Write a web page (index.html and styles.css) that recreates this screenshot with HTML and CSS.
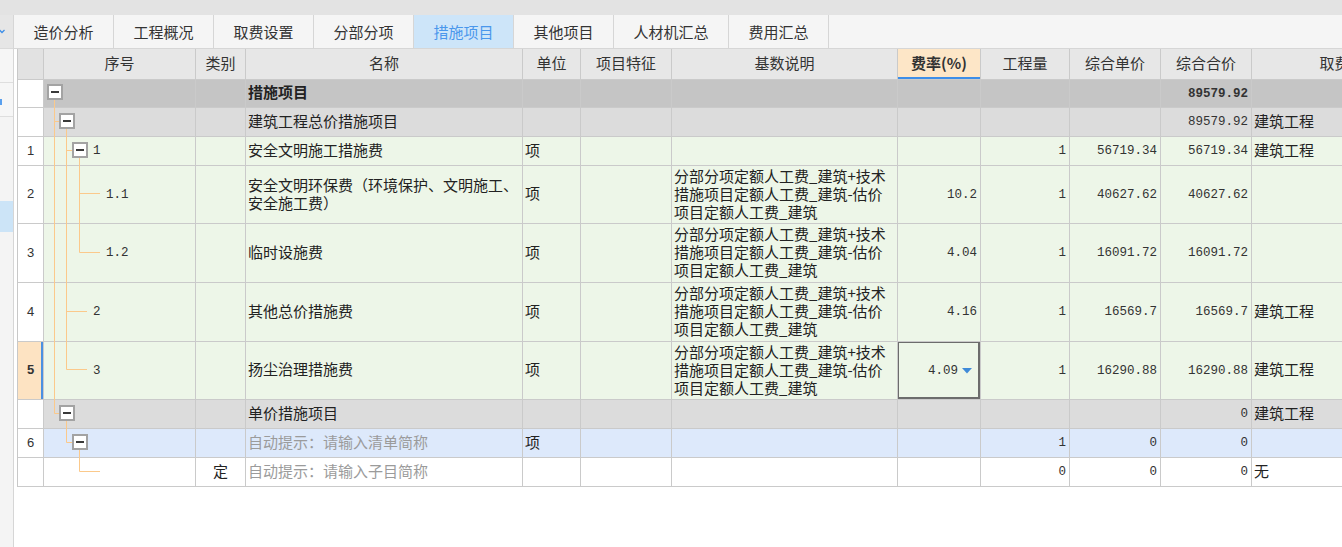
FILE: index.html
```html
<!DOCTYPE html>
<html lang="zh">
<head>
<meta charset="utf-8">
<title>措施项目</title>
<link rel="stylesheet" href="styles.css">
</head>
<body>
<div class="topbar"></div>
<div class="main">
  <aside class="side">
    <div class="side-head">
      <svg class="chev" width="6" height="5" viewBox="0 0 6 5"><polyline points="0.5,1 3,3.5 5.5,1" fill="none" stroke="#3d8ee8" stroke-width="1.3"/></svg>
    </div>
    <div class="side-item"></div>
    <div class="side-item"><span class="side-mark"></span></div>
    <div class="side-fill"></div>
    <div class="side-active"></div>
  </aside>
  <section class="content">
    <nav class="tabs">
      <div class="tab">造价分析</div>
      <div class="tab">工程概况</div>
      <div class="tab">取费设置</div>
      <div class="tab">分部分项</div>
      <div class="tab active">措施项目</div>
      <div class="tab">其他项目</div>
      <div class="tab wide">人材机汇总</div>
      <div class="tab">费用汇总</div>
    </nav>
    <div class="sheet">
      <div class="grid">
        <div class="row head">
          <div class="c"></div>
          <div class="c">序号</div>
          <div class="c">类别</div>
          <div class="c">名称</div>
          <div class="c">单位</div>
          <div class="c">项目特征</div>
          <div class="c">基数说明</div>
          <div class="c rate-head">费率(%)</div>
          <div class="c">工程量</div>
          <div class="c">综合单价</div>
          <div class="c">综合合价</div>
          <div class="c">取费专业</div>
        </div>
        <div class="body">
          <div class="row h28 bg-top">
            <div class="c num"></div>
            <div class="c"></div>
            <div class="c"></div>
            <div class="c bold">措施项目</div>
            <div class="c"></div>
            <div class="c"></div>
            <div class="c"></div>
            <div class="c"></div>
            <div class="c"></div>
            <div class="c"></div>
            <div class="c n bold">89579.92</div>
            <div class="c"></div>
          </div>
          <div class="row h29 bg-sub">
            <div class="c num"></div>
            <div class="c"></div>
            <div class="c"></div>
            <div class="c">建筑工程总价措施项目</div>
            <div class="c"></div>
            <div class="c"></div>
            <div class="c"></div>
            <div class="c"></div>
            <div class="c"></div>
            <div class="c"></div>
            <div class="c n">89579.92</div>
            <div class="c">建筑工程</div>
          </div>
          <div class="row h29 bg-green">
            <div class="c num">1</div>
            <div class="c seq l2">1</div>
            <div class="c"></div>
            <div class="c">安全文明施工措施费</div>
            <div class="c">项</div>
            <div class="c"></div>
            <div class="c"></div>
            <div class="c"></div>
            <div class="c n">1</div>
            <div class="c n">56719.34</div>
            <div class="c n">56719.34</div>
            <div class="c">建筑工程</div>
          </div>
          <div class="row h58 bg-green">
            <div class="c num">2</div>
            <div class="c seq l3">1.1</div>
            <div class="c"></div>
            <div class="c wrap">安全文明环保费（环境保护、文明施工、<br>安全施工费）</div>
            <div class="c">项</div>
            <div class="c"></div>
            <div class="c wrap">分部分项定额人工费_建筑+技术<br>措施项目定额人工费_建筑-估价<br>项目定额人工费_建筑</div>
            <div class="c n">10.2</div>
            <div class="c n">1</div>
            <div class="c n">40627.62</div>
            <div class="c n">40627.62</div>
            <div class="c"></div>
          </div>
          <div class="row h59 bg-green">
            <div class="c num">3</div>
            <div class="c seq l3">1.2</div>
            <div class="c"></div>
            <div class="c">临时设施费</div>
            <div class="c">项</div>
            <div class="c"></div>
            <div class="c wrap">分部分项定额人工费_建筑+技术<br>措施项目定额人工费_建筑-估价<br>项目定额人工费_建筑</div>
            <div class="c n">4.04</div>
            <div class="c n">1</div>
            <div class="c n">16091.72</div>
            <div class="c n">16091.72</div>
            <div class="c"></div>
          </div>
          <div class="row h59 bg-green">
            <div class="c num">4</div>
            <div class="c seq l2">2</div>
            <div class="c"></div>
            <div class="c">其他总价措施费</div>
            <div class="c">项</div>
            <div class="c"></div>
            <div class="c wrap">分部分项定额人工费_建筑+技术<br>措施项目定额人工费_建筑-估价<br>项目定额人工费_建筑</div>
            <div class="c n">4.16</div>
            <div class="c n">1</div>
            <div class="c n">16569.7</div>
            <div class="c n">16569.7</div>
            <div class="c">建筑工程</div>
          </div>
          <div class="row h58 bg-green">
            <div class="c num current">5</div>
            <div class="c seq l2">3</div>
            <div class="c"></div>
            <div class="c">扬尘治理措施费</div>
            <div class="c">项</div>
            <div class="c"></div>
            <div class="c wrap">分部分项定额人工费_建筑+技术<br>措施项目定额人工费_建筑-估价<br>项目定额人工费_建筑</div>
            <div class="c n selected">4.09<svg class="drop" width="10" height="6" viewBox="0 0 10 6"><polygon points="0,0 10,0 5,5.5" fill="#3f8ad8"/></svg></div>
            <div class="c n">1</div>
            <div class="c n">16290.88</div>
            <div class="c n">16290.88</div>
            <div class="c">建筑工程</div>
          </div>
          <div class="row h29 bg-sub">
            <div class="c num"></div>
            <div class="c"></div>
            <div class="c"></div>
            <div class="c">单价措施项目</div>
            <div class="c"></div>
            <div class="c"></div>
            <div class="c"></div>
            <div class="c"></div>
            <div class="c"></div>
            <div class="c"></div>
            <div class="c n">0</div>
            <div class="c">建筑工程</div>
          </div>
          <div class="row h29 bg-blue">
            <div class="c num">6</div>
            <div class="c"></div>
            <div class="c"></div>
            <div class="c hint">自动提示：请输入清单简称</div>
            <div class="c">项</div>
            <div class="c"></div>
            <div class="c"></div>
            <div class="c"></div>
            <div class="c n">1</div>
            <div class="c n">0</div>
            <div class="c n">0</div>
            <div class="c"></div>
          </div>
          <div class="row h29 bg-white">
            <div class="c num"></div>
            <div class="c"></div>
            <div class="c center">定</div>
            <div class="c hint">自动提示：请输入子目简称</div>
            <div class="c"></div>
            <div class="c"></div>
            <div class="c"></div>
            <div class="c"></div>
            <div class="c n">0</div>
            <div class="c n">0</div>
            <div class="c n">0</div>
            <div class="c">无</div>
          </div>

          <svg class="tree" width="152" height="410" viewBox="0 0 152 410">
            <g stroke="#fbc98b" stroke-width="1" fill="none">
              <line x1="11.5" y1="21" x2="11.5" y2="334.5"/>
              <line x1="11.5" y1="334.5" x2="16" y2="334.5"/>
              <line x1="11.5" y1="42.5" x2="16" y2="42.5"/>
              <line x1="23.5" y1="50" x2="23.5" y2="290.5"/>
              <line x1="23.5" y1="71.5" x2="29" y2="71.5"/>
              <line x1="23.5" y1="232.5" x2="44" y2="232.5"/>
              <line x1="23.5" y1="290.5" x2="44" y2="290.5"/>
              <line x1="36.5" y1="79" x2="36.5" y2="173.5"/>
              <line x1="36.5" y1="114.5" x2="57" y2="114.5"/>
              <line x1="36.5" y1="173.5" x2="57" y2="173.5"/>
              <line x1="23.5" y1="342" x2="23.5" y2="363.5"/>
              <line x1="23.5" y1="363.5" x2="29" y2="363.5"/>
              <line x1="36.5" y1="371" x2="36.5" y2="392.5"/>
              <line x1="36.5" y1="392.5" x2="57" y2="392.5"/>
            </g>
            <g>
              <rect x="5" y="6" width="14" height="14" fill="#fff" stroke="#a3a3a3" stroke-width="2"/>
              <rect x="8" y="12" width="8" height="2" fill="#3a3a3a"/>
              <rect x="17" y="35" width="14" height="14" fill="#fff" stroke="#a3a3a3" stroke-width="2"/>
              <rect x="20" y="41" width="8" height="2" fill="#3a3a3a"/>
              <rect x="30" y="64" width="14" height="14" fill="#fff" stroke="#a3a3a3" stroke-width="2"/>
              <rect x="33" y="70" width="8" height="2" fill="#3a3a3a"/>
              <rect x="17" y="327" width="14" height="14" fill="#fff" stroke="#a3a3a3" stroke-width="2"/>
              <rect x="20" y="333" width="8" height="2" fill="#3a3a3a"/>
              <rect x="30" y="356" width="14" height="14" fill="#fff" stroke="#a3a3a3" stroke-width="2"/>
              <rect x="33" y="362" width="8" height="2" fill="#3a3a3a"/>
            </g>
          </svg>
        </div>
      </div>
    </div>
  </section>
</div>
</body>
</html>
```

FILE: styles.css
```css
html, body {
  margin: 0;
  padding: 0;
}

body {
  width: 1342px;
  height: 547px;
  overflow: hidden;
  background: #ffffff;
  font-family: "Noto Sans CJK SC", "Noto Sans", sans-serif;
  font-size: 15px;
  color: #222222;
}

.topbar {
  height: 15px;
  background: #e3e3e3;
}

.main {
  display: flex;
  height: 532px;
}

/* left strip */
.side {
  width: 14px;
  flex: none;
  box-sizing: border-box;
  border-right: 1px solid #d6d6d6;
  background: #f4f4f4;
  display: flex;
  flex-direction: column;
}

.side-head {
  height: 34px;
  box-sizing: border-box;
  background: #e6e6e6;
  border-bottom: 1px solid #dadada;
  display: flex;
  align-items: center;
}

.chev {
  display: block;
  margin-left: -1px;
}

.side-item {
  height: 34px;
  box-sizing: border-box;
  border-bottom: 1px solid #dedede;
  background: #f6f6f6;
  display: flex;
  align-items: center;
}

.side-mark {
  display: block;
  width: 3px;
  height: 6px;
  margin-top: 4px;
  border-left: 2px solid #5aa0ee;
  box-sizing: border-box;
}

.side-fill {
  height: 84px;
  background: #f4f4f4;
}

.side-active {
  height: 31px;
  background: #cce4f7;
}

/* content */
.content {
  flex: 1;
  min-width: 0;
  display: flex;
  flex-direction: column;
}

.tabs {
  display: flex;
  height: 34px;
  box-sizing: border-box;
  background: #f5f5f5;
  border-bottom: 1px solid #d6d6d6;
  flex: none;
}

.tab {
  width: 100px;
  box-sizing: border-box;
  border-right: 1px solid #d6d6d6;
  display: flex;
  align-items: center;
  justify-content: center;
  padding-bottom: 1px;
  color: #333333;
  font-size: 15px;
}

.tab.wide {
  width: 115px;
}

.tab.active {
  background: #cde5f9;
  color: #4a97ec;
}

.sheet {
  flex: 1;
  padding-left: 3px;
  background: #ffffff;
}

.grid {
  border-left: 1px solid #c8c8c8;
  width: max-content;
}

.row {
  display: grid;
  grid-template-columns: 26px 152px 50px 277px 58px 91px 226px 83px 89px 91px 91px 196px;
  height: 29px;
}

.row.head {
  height: 31px;
  background: #e7e7e7;
}

.row.head .c {
  justify-content: center;
  color: #333333;
}

.row.head .c:first-child {
  background: #e2e2e2;
}

.rate-head {
  background: #fde6c7;
  font-weight: bold;
  box-shadow: inset 0 -2px 0 #3d8ee8;
}

.h28 { height: 28px; }
.h29 { height: 29px; }
.h58 { height: 58px; }
.h59 { height: 59px; }

.body {
  position: relative;
}

.c {
  box-sizing: border-box;
  border-right: 1px solid #cacaca;
  border-bottom: 1px solid #cacaca;
  display: flex;
  align-items: center;
  padding: 0 2px 4px;
  overflow: hidden;
  white-space: nowrap;
  min-width: 0;
}

.bg-top { background: #c5c5c5; }
.bg-sub { background: #dcdcdc; }
.bg-green { background: #edf6e8; }
.bg-blue { background: #dde9fb; }
.bg-white { background: #ffffff; }

.c.num {
  background: #ffffff;
  justify-content: center;
  padding-bottom: 2px;
  font-family: "Liberation Sans", "DejaVu Sans", sans-serif;
  font-size: 13px;
  color: #333333;
}

.c.num.current {
  background: #fde3c2;
  font-weight: bold;
  box-shadow: inset -2px 0 0 #4a90e2;
}

.bold {
  font-weight: bold;
}

.c.n {
  justify-content: flex-end;
  padding-right: 3px;
  padding-bottom: 0;
  font-family: "Liberation Mono", "DejaVu Sans Mono", monospace;
  font-size: 12.5px;
  color: #333333;
}

.c.seq {
  padding-bottom: 0;
  font-family: "Liberation Mono", "DejaVu Sans Mono", monospace;
  font-size: 12.5px;
  color: #333333;
}

.c.l2 { padding-left: 49px; }
.c.l3 { padding-left: 62px; }

.c.wrap {
  white-space: nowrap;
  line-height: 18px;
  padding-bottom: 2px;
}

.c.center {
  justify-content: center;
}

.c.hint {
  color: #9b9b9b;
}

.c.selected {
  position: relative;
  padding-right: 8px;
}

.c.selected::after {
  content: "";
  position: absolute;
  left: -1px;
  top: -1px;
  right: 0;
  bottom: 0;
  border: 2px solid #6c6c6c;
}

.drop {
  display: block;
  margin-left: 4px;
  margin-top: 1px;
}

.tree {
  position: absolute;
  left: 25px;
  top: -1px;
}
```
